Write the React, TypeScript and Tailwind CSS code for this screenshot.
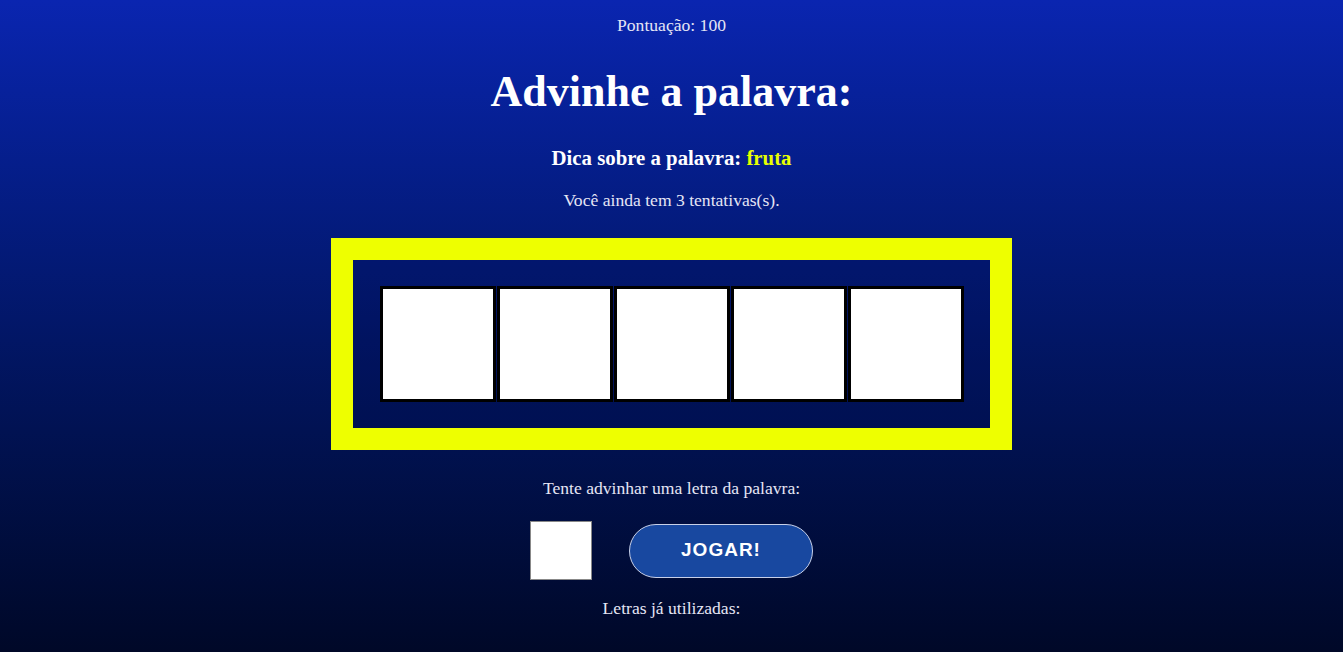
import React from 'react';

const letters = ['', '', '', '', ''];

export default function App() {
  return (
    <div className="min-h-screen w-full bg-gradient-to-b from-[#0a25b0] to-[#000828] text-[#e6e6f5] [font-family:'Liberation_Serif',serif] flex flex-col items-center">
      <p className="mt-[14px] text-[17.6px] leading-[22px]">Pontuação: 100</p>

      <h1 className="mt-[30px] text-[44px] leading-[52px] font-bold text-white">Advinhe a palavra:</h1>

      <p className="mt-[27px] text-[20.8px] leading-[26px] font-bold text-white">
        Dica sobre a palavra: <span className="text-[#e8ff00]">fruta</span>
      </p>

      <p className="mt-[18px] text-[17.6px] leading-[22px]">Você ainda tem 3 tentativas(s).</p>

      <div className="mt-[27px] border-[22px] border-[#eeff00] bg-[#000a50]/20 p-[26px] w-[681px] flex justify-center">
        <div className="flex gap-[1px]">
          {letters.map((l, i) => (
            <div key={i} className="w-[116px] h-[116px] bg-white border-[3px] border-black flex items-center justify-center text-black text-[48px]">
              {l}
            </div>
          ))}
        </div>
      </div>

      <p className="mt-[27px] text-[17.6px] leading-[22px]">Tente advinhar uma letra da palavra:</p>

      <div className="mt-[22px] flex items-center gap-[37px]">
        <input
          type="text"
          maxLength={1}
          className="w-[62px] h-[59px] bg-white border border-[#888] outline-none text-black text-center text-[24px]"
        />
        <button className="w-[184px] h-[54px] rounded-full bg-[#1848a0] border border-[#c8d0e8] text-white font-bold text-[19px] tracking-[1px] [font-family:'Liberation_Sans',sans-serif]">
          JOGAR!
        </button>
      </div>

      <p className="mt-[17px] text-[17.6px] leading-[22px]">Letras já utilizadas:</p>
    </div>
  );
}
